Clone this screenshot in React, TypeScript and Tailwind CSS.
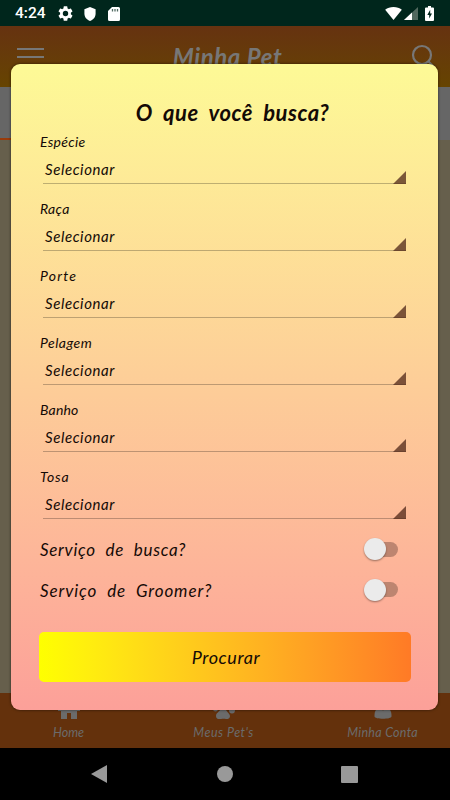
import React from 'react';

interface SelectFieldProps {
  label: string;
  labelClass: string;
}

const fields: SelectFieldProps[] = [
  { label: 'Espécie', labelClass: 'tracking-[0.3px]' },
  { label: 'Raça', labelClass: 'tracking-[0.3px]' },
  { label: 'Porte', labelClass: 'tracking-[1.2px]' },
  { label: 'Pelagem', labelClass: 'tracking-[0.5px]' },
  { label: 'Banho', labelClass: 'tracking-[0.2px]' },
  { label: 'Tosa', labelClass: 'tracking-[0.8px]' },
];

const StatusBar: React.FC = () => (
  <div className="flex h-[26px] shrink-0 items-center bg-[#00261c] pt-px pr-[15px] pl-[15px] text-white">
    <span className="w-[43px] font-[Roboto] text-[15.5px] leading-none font-medium not-italic">4:24</span>
    <svg className="h-[15px] w-[15px]" viewBox="2 2 20 20" fill="currentColor">
      <path d="M19.14 12.94c.04-.3.06-.61.06-.94 0-.32-.02-.64-.07-.94l2.03-1.58a.49.49 0 0 0 .12-.61l-1.92-3.32a.49.49 0 0 0-.59-.22l-2.39.96a7 7 0 0 0-1.62-.94l-.36-2.54a.48.48 0 0 0-.48-.41h-3.84a.47.47 0 0 0-.47.41l-.36 2.54c-.59.24-1.13.57-1.62.94l-2.39-.96a.48.48 0 0 0-.59.22L2.74 8.87a.47.47 0 0 0 .12.61l2.03 1.58a6 6 0 0 0-.09.94c0 .31.02.64.07.94l-2.03 1.58a.49.49 0 0 0-.12.61l1.92 3.32c.12.22.37.29.59.22l2.39-.96c.5.38 1.03.7 1.62.94l.36 2.54c.05.24.24.41.48.41h3.84c.24 0 .44-.17.47-.41l.36-2.54a6.6 6.6 0 0 0 1.62-.94l2.39.96c.22.08.47 0 .59-.22l1.92-3.32a.47.47 0 0 0-.12-.61zM12 15.6A3.6 3.6 0 1 1 12 8.4a3.6 3.6 0 0 1 0 7.2z" />
    </svg>
    <svg className="ml-[11px] h-[14px] w-3" viewBox="0 0 12 15" fill="currentColor">
      <path d="M6 0 0 2.5V7c0 3.8 2.5 6.8 6 8 3.5-1.2 6-4.2 6-8V2.5z" />
    </svg>
    <svg className="ml-3 h-[14px] w-3" viewBox="0 0 12 14">
      <path d="M4 0h6.5A1.5 1.5 0 0 1 12 1.5v11a1.5 1.5 0 0 1-1.5 1.5h-9A1.5 1.5 0 0 1 0 12.5V4z" fill="#fff" />
      <path d="M4.5 2v2.5M7 2v2.5M9.5 2v2.5" stroke="#506a62" strokeWidth="1.3" />
    </svg>
    <svg className="ml-auto h-[13px] w-[17px]" viewBox="0 0 18 14" fill="currentColor">
      <path d="M0 3C2.5 1 5.5 0 9 0s6.5 1 9 3L9 14z" />
    </svg>
    <svg className="ml-[2px] h-[13px] w-[14px]" viewBox="0 0 14 13">
      <path d="M0 13 14 0v13z" fill="#52695f" />
      <path d="M0 13 8 5.57V13z" fill="#fff" />
    </svg>
    <svg className="mr-px ml-[7px] h-[15px] w-[9px]" viewBox="0 0 9 15">
      <path d="M3 0h3v1.5h2a1 1 0 0 1 1 1V14a1 1 0 0 1-1 1H1a1 1 0 0 1-1-1V2.5a1 1 0 0 1 1-1h2z" fill="#fff" />
      <path d="M5.2 3.8 2.3 9h1.9v3.5L7 7.6H5.2z" fill="#00261c" />
    </svg>
  </div>
);

const HomeIcon: React.FC = () => (
  <svg className="h-[22px] w-[22px]" viewBox="0 0 22 22" fill="currentColor">
    <path d="M11 3 0 13v1h3v8h6v-6h4v6h6v-8h3v-1z" />
  </svg>
);

const PawIcon: React.FC = () => (
  <svg className="h-[22px] w-[22px]" viewBox="0 0 22 22" fill="currentColor">
    <path d="M3 19c0-3 3-4 4-6s4-3 6 0 4 4 4 6-1.5 3.5-4 3c-2-.5-3-.5-5 0s-5 0-5-3z" />
    <ellipse cx="2.5" cy="11.5" rx="2.5" ry="3" />
    <ellipse cx="7" cy="5" rx="2.5" ry="3.5" />
    <ellipse cx="14" cy="5" rx="2.5" ry="3.5" />
    <ellipse cx="19" cy="13" rx="3" ry="3.5" />
  </svg>
);

const AccountIcon: React.FC = () => (
  <svg className="h-[22px] w-[18px]" viewBox="0 0 18 22" fill="currentColor">
    <circle cx="9" cy="6" r="5" />
    <path d="M.5 18c0-4 1.500-6 4-6 2.500 1.500 6.500 1.500 9 0 2.500 0 4 2 4 6v1.500c0 3-17 3-17 0z" />
  </svg>
);

const SelectField: React.FC<SelectFieldProps> = ({ label, labelClass }) => (
  <div className="h-[67.1px] pl-px">
    <div className={`h-[17px] text-[14px] leading-[17px] ${labelClass}`}>{label}</div>
    <div className="mr-[5px] ml-[3px] flex h-[34px] items-start justify-between border-b border-black/25">
      <span className="pt-[9px] pl-[2px] text-[15px] leading-5 tracking-[0.6px]">Selecionar</span>
      <svg className="-mb-px h-[13px] w-[13px] self-end" viewBox="0 0 13 13">
        <path d="M13 0v13H0z" fill="#4f2718" fillOpacity="0.75" />
      </svg>
    </div>
  </div>
);

const SwitchRow: React.FC<{ label: string; labelClass: string }> = ({ label, labelClass }) => (
  <div className="flex h-[40.5px] items-center justify-between pr-[13px] pl-px">
    <span className={`pt-px text-[17px] ${labelClass}`}>{label}</span>
    <span className="flex h-[15px] w-[31px] items-center rounded-full bg-[#bd8570]">
      <span className="-ml-[3px] h-[22px] w-[22px] shrink-0 rounded-full bg-[#ebebeb] shadow-[0_1px_2px_rgba(0,0,0,0.4)]" />
    </span>
  </div>
);

const SearchDialog: React.FC = () => (
  <div className="absolute top-[64px] left-[11.3px] h-[645.7px] w-[427px] rounded-[9px] bg-linear-to-b from-[#fdfa96] via-[#fdcd98] to-[#fca099] pt-[34px] pr-[27.3px] pl-[27.7px] text-[#140a06] shadow-[0_0_3px_rgba(0,0,0,0.6)]">
    <h2 className="h-[35px] pl-[15px] text-center text-[22px] leading-[30px] font-bold tracking-[0.5px] [word-spacing:5px]">O que você busca?</h2>
    {fields.map(field => (
      <SelectField key={field.label} {...field} />
    ))}
    <div className="-mt-[6.5px]">
      <SwitchRow label="Serviço de busca?" labelClass="tracking-[0.7px] [word-spacing:5px]" />
      <SwitchRow label="Serviço de Groomer?" labelClass="tracking-[0.9px] [word-spacing:5px]" />
    </div>
    <button className="mt-[21.5px] block h-[50px] w-full rounded-[5px] bg-linear-to-r from-[#feff00] to-[#ff7a26] pt-px pl-[2px] text-[18px] tracking-[0.6px] italic">
      Procurar
    </button>
  </div>
);

export default function App() {
  return (
    <div className="relative flex h-[800px] w-[450px] flex-col overflow-hidden bg-[#665f4c] font-['Lato','Open_Sans',sans-serif] italic">
      <StatusBar />
      <header className="flex h-[61px] shrink-0 items-start justify-between bg-linear-to-b from-[#663210] to-[#664400] pr-[15px] pl-[17px] text-[#777]">
        <div className="mt-[22px] flex w-[27px] flex-col gap-[6px]">
          <span className="h-[2px] bg-current" />
          <span className="h-[2px] bg-current" />
        </div>
        <h1 className="mt-[15px] text-[24px] leading-8 font-bold tracking-[0.6px]">Minha Pet</h1>
        <svg className="mt-[18px] h-6 w-6" viewBox="0 0 24 24" fill="none" stroke="currentColor" strokeWidth="2.2">
          <circle cx="11" cy="11" r="9" />
          <path d="m17.500 17.500 6 6" />
        </svg>
      </header>
      <div className="h-[53px] shrink-0 bg-[#666666] pt-[51px]">
        <div className="h-[2px] w-[225px] bg-[#993b0b]" />
      </div>
      <main className="flex-1 bg-[#665f4c]" />
      <nav className="flex h-[55px] shrink-0 justify-between bg-[#64310c] pr-[32px] pl-[53px] text-[12.5px] text-[#6b6b6b]">
        <div className="flex flex-col items-center pt-[4px]"><HomeIcon /><span className="mt-[5px]">Home</span></div>
        <div className="flex flex-col items-center pt-[4px] pl-[16px]"><PawIcon /><span className="mt-[5px] tracking-[0.5px]">Meus Pet's</span></div>
        <div className="flex flex-col items-center pt-[4px]"><AccountIcon /><span className="mt-[5px] tracking-[0.3px]">Minha Conta</span></div>
      </nav>
      <div className="flex h-[52px] shrink-0 items-center justify-between bg-black pr-[92px] pl-[91px]">
        <svg className="h-[18px] w-[16px]" viewBox="0 0 16 18"><path d="M16 0v18L0 9z" fill="#999" /></svg>
        <span className="ml-px h-4 w-4 rounded-full bg-[#999]" />
        <span className="h-[17px] w-[17px] rounded-[1px] bg-[#999]" />
      </div>
      <SearchDialog />
    </div>
  );
}
